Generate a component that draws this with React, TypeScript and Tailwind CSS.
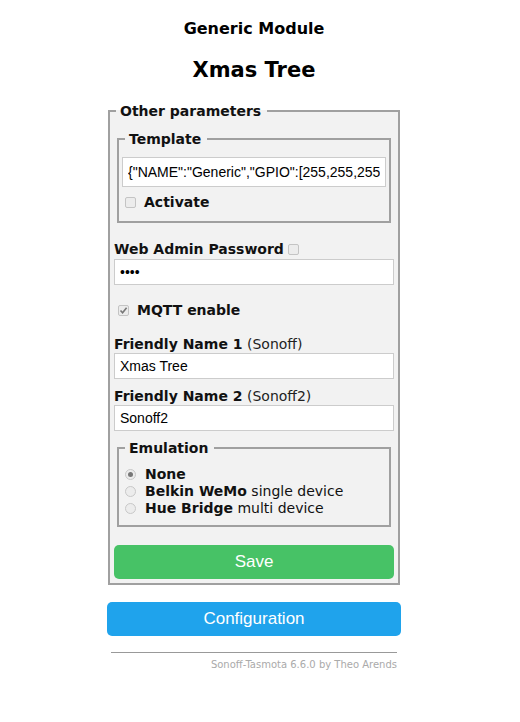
import React from "react"

const label = "font-['DejaVu_Sans',Verdana,sans-serif] font-bold text-[14px] text-[#111]"
const input = "block w-full h-[26px] px-[5px] bg-white border border-[#ccc] font-['Liberation_Sans',Arial,sans-serif] text-[14px] text-black outline-none"
const legend = "pl-[4px] pr-[6px] text-[14px] font-bold leading-[18px] text-[#111]"
const box = "w-[11px] h-[11px] border border-[#c4c4c4] rounded-[2px] bg-[#ececec] flex items-center justify-center shrink-0"

const Check = ({ checked }: { checked?: boolean }) => (
    <span className={box}>
        {checked && (
            <svg width="9" height="9" viewBox="0 0 9 9">
                <path d="M1.5 4.5 L3.6 6.8 L7.6 1.8" fill="none" stroke="#777" strokeWidth="1.6" />
            </svg>
        )}
    </span>
)

const Radio = ({ checked }: { checked?: boolean }) => (
    <span className="w-[11px] h-[11px] rounded-full border border-[#c8c8c8] bg-[#ececec] flex items-center justify-center shrink-0">
        {checked && <span className="w-[5px] h-[5px] rounded-full bg-[#777]"></span>}
    </span>
)

export default function App() {
    return (
        <div className="min-h-[722px] bg-white font-['DejaVu_Sans',Verdana,sans-serif] text-black flex justify-center pr-[12px]">
            <div className="w-[294px] pt-[19px]">
                <div className="text-center">
                    <h3 className="text-[16px] font-bold leading-[20px]">Generic Module</h3>
                    <h2 className="text-[21px] font-bold leading-[26px] mt-[18px]">Xmas Tree</h2>
                </div>

                <fieldset className="mt-[19px] mx-[1px] border-2 border-[#a0a0a0] bg-[#f2f2f2] px-[4px] pb-[4px]">
                    <legend className={legend + " ml-[2px]"}>Other parameters</legend>

                    <fieldset className="mt-[10px] mx-[3px] border-2 border-[#a0a0a0] px-[3px] pb-[10px]">
                        <legend className={legend + " ml-[3px]"}>Template</legend>
                        <input className={input + " h-[30px] mt-[9px]"} readOnly value={'{"NAME":"Generic","GPIO":[255,255,255,255,255,255,255,255,255,255,255,255,255],"FLAG":1,"BASE":18}'} />
                        <div className="flex items-center gap-[8px] mt-[6px] ml-[3px] h-[18px]">
                            <Check />
                            <span className={label}>Activate</span>
                        </div>
                    </fieldset>

                    <div className="mt-[17px] flex items-center gap-[4px] h-[18px]">
                        <span className={label}>Web Admin Password</span>
                        <Check />
                    </div>
                    <input type="password" className={input + " mt-[1px]"} readOnly value="1234" />

                    <div className="flex items-center gap-[8px] mt-[16px] ml-[4px] h-[18px]">
                        <Check checked />
                        <span className={label}>MQTT enable</span>
                    </div>

                    <div className="mt-[16px] leading-[17px]">
                        <span className={label}>Friendly Name 1</span>
                        <span className="text-[14px] text-[#222]"> (Sonoff)</span>
                    </div>
                    <input className={input} readOnly value="Xmas Tree" />

                    <div className="mt-[8px] leading-[17px]">
                        <span className={label}>Friendly Name 2</span>
                        <span className="text-[14px] text-[#222]"> (Sonoff2)</span>
                    </div>
                    <input className={input} readOnly value="Sonoff2" />

                    <fieldset className="mt-[8px] mx-[3px] border-2 border-[#a0a0a0] px-[6px] pb-[8px]">
                        <legend className={legend}>Emulation</legend>
                        <div className="mt-[9px] flex flex-col text-[14px] leading-[17px] text-[#111]">
                            <div className="flex items-center gap-[9px]">
                                <Radio checked />
                                <span className="font-bold">None</span>
                            </div>
                            <div className="flex items-center gap-[9px]">
                                <Radio />
                                <span><b>Belkin WeMo</b> single device</span>
                            </div>
                            <div className="flex items-center gap-[9px]">
                                <Radio />
                                <span><b>Hue Bridge</b> multi device</span>
                            </div>
                        </div>
                    </fieldset>

                    <button className="block w-full h-[34px] mt-[18px] rounded-[5px] bg-[#47c266] text-white text-[17px] font-['Liberation_Sans',Arial,sans-serif]">Save</button>
                </fieldset>

                <button className="block w-full h-[34px] mt-[17px] rounded-[5px] bg-[#1fa3ec] text-white text-[17px] font-['Liberation_Sans',Arial,sans-serif]">Configuration</button>

                <div className="mt-[16px] mx-[4px] border-t border-[#999]"></div>
                <div className="text-right text-[10px] leading-[12px] text-[#aaa] mt-[6px] mr-[4px]">Sonoff-Tasmota 6.6.0 by Theo Arends</div>
            </div>
        </div>
    )
}
